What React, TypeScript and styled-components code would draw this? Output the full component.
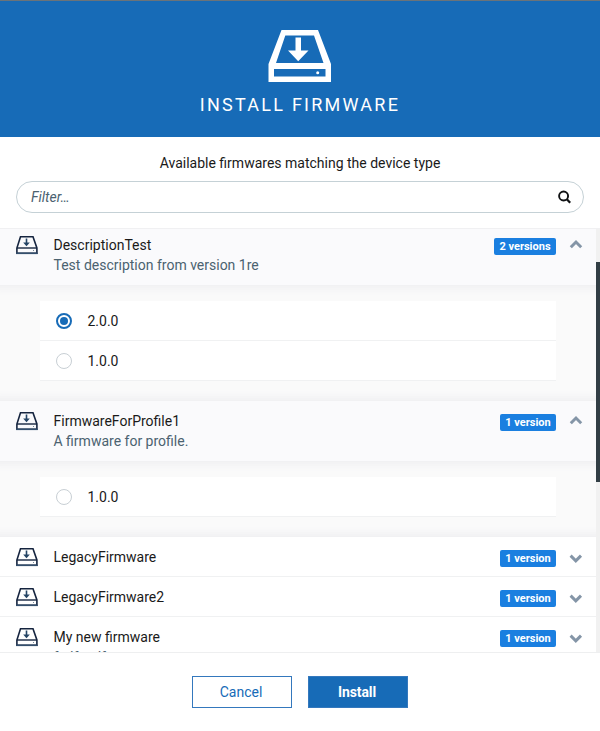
import React from "react";
import styled, { createGlobalStyle } from "styled-components";

const Global = createGlobalStyle`
  * { box-sizing: border-box; }
  body { margin: 0; background: #fff; font-family: Roboto, "Liberation Sans", sans-serif; font-size: 14px; line-height: 20px; color: #1a1a1a; }
`;
const Dialog = styled.main`
  width: 600px; height: 731px; overflow: hidden; display: flex; flex-direction: column; background: #fff;
`;
const Header = styled.header`
  height: 137px; flex: none; background: #176bb7; border-top: 1px solid #6b7379; color: #fff;
  display: flex; flex-direction: column; align-items: center; padding-top: 28px;
`;
const Title = styled.h1`
  margin: 10px 0 0; font-size: 18px; line-height: 24px; font-weight: 400; letter-spacing: 2.25px; text-transform: uppercase;
`;
const Intro = styled.p`
  flex: none; margin: 16px 0 8px; text-align: center;
`;
const SearchBox = styled.label`
  flex: none; height: 32px; margin: 0 16px 15px; padding: 0 12px 0 14px; border: 1px solid #c5d1d6; border-radius: 16px;
  display: flex; align-items: center; justify-content: space-between;
`;
const SearchInput = styled.input`
  flex: 1; border: 0; outline: 0; padding: 0; background: transparent; font: italic 14px/20px Roboto, sans-serif;
  &::placeholder { color: #4b6270; opacity: 1; }
`;
const Scroller = styled.div`
  height: 425px; flex: none; display: flex; overflow: hidden; border-top: 1px solid #f0f0f2; border-bottom: 1px solid #eeeff0;
`;
const List = styled.div`
  width: 596px; height: 100%; overflow: hidden;
  & > :first-child { margin-top: -4px; }
`;
const Track = styled.div`
  width: 4px; background: #f1f1f1; padding-top: 33px;
`;
const Thumb = styled.div`
  height: 220px; background: #323e45;
`;
const ItemHead = styled.div<{ $open?: boolean; $height: number }>`
  height: ${p => p.$height}px; padding: 10px 13px 0 16px; display: flex; align-items: flex-start;
  background: ${p => (p.$open ? "#fafafc" : "#fff")};
  border-bottom: ${p => (p.$open ? "0" : "1px solid #f0f1f2")};
`;
const ItemIcon = styled.span`
  width: 37.5px; height: 20px; display: flex;
`;
const ItemText = styled.div`
  flex: 1;
`;
const Description = styled.div`
  color: #4b6270;
`;
const Badge = styled.span<{ $wide?: boolean }>`
  width: ${p => (p.$wide ? 62 : 56)}px; height: 17px; margin: 3px 13px 0 0; border-radius: 2px; background: #1a7fe0; color: #fff;
  font-size: 11px; line-height: 17px; font-weight: 700; text-align: center; white-space: nowrap;
`;
const Chevron = styled.svg`
  width: 14px; height: 20px;
`;
const Panel = styled.div`
  padding: 16px 40px 20px; background: #fafafa;
  box-shadow: inset 0 12px 10px -10px #ececef, inset 0 -12px 10px -10px #ececef;
`;
const Option = styled.label`
  height: 40px; display: flex; align-items: center; gap: 15.5px; padding-left: 16px; background: #fff; border-bottom: 1px solid #f0f1f2;
`;
const Radio = styled.span<{ $checked?: boolean }>`
  width: 16px; height: 16px; border-radius: 50%; display: grid; place-items: center; background: #fff;
  border: ${p => (p.$checked ? "2px solid #176bb7" : "1px solid #c8cfd4")};
  &::after { content: ""; width: 8px; height: 8px; border-radius: 50%; background: ${p => (p.$checked ? "#176bb7" : "transparent")}; }
`;
const Footer = styled.footer`
  flex: 1; padding-top: 23px; display: flex; justify-content: center; align-items: flex-start; gap: 16px;
`;
const Button = styled.button<{ $primary?: boolean }>`
  width: 100px; height: 32px; padding: 0 2px 0 0; border: 1px solid #3478bd; font: ${p => (p.$primary ? 700 : 400)} 14px/20px Roboto, sans-serif;
  letter-spacing: ${p => (p.$primary ? "-0.1px" : "0")};
  background: ${p => (p.$primary ? "#176bb7" : "#fff")}; color: ${p => (p.$primary ? "#fff" : "#176bb7")};
`;

function DriveLarge() {
  return (
    <svg width="64" height="54" viewBox="0 0 64 54" fill="none">
      <path fill="#fff" fillRule="evenodd" d="M13.5 1H50L63 35V53H.5V35ZM17.3 6.5 8 34H55.5L46 6.5ZM6 40V47.5H57.5V40Z" />
      <path fill="#fff" d="M27.5 8.5H33V21.5H40.5L30.2 32.2 20 21.5H27.5Z" />
      <circle cx="49.7" cy="43.7" r="1.5" fill="#fff" />
    </svg>
  );
}
function DriveSmall() {
  return (
    <svg width="22" height="20" viewBox="0 0 22 20" fill="none">
      <path d="M4.5 1.7H17L20.9 13V18.2H.9V13Z" stroke="#15243f" strokeWidth="1.6" />
      <path d="M1 13H21" stroke="#15243f" strokeWidth="1.4" />
      <path d="M.1 18.3H21.7" stroke="#344f6d" strokeWidth="1.6" />
      <path d="M10.5 3.5V8" stroke="#244465" strokeWidth="1.6" />
      <path d="M7.2 7.5H13.8L10.5 11.2Z" fill="#244465" />
      <path d="M17 15.5H18" stroke="#7a8999" />
    </svg>
  );
}

type Firmware = { name: string; description?: string; height: number; versions?: string[]; selected?: string };
const firmwares: Firmware[] = [
  { name: "DescriptionTest", description: "Test description from version 1re", height: 60, versions: ["2.0.0", "1.0.0"], selected: "2.0.0" },
  { name: "FirmwareForProfile1", description: "A firmware for profile.", height: 60, versions: ["1.0.0"] },
  { name: "LegacyFirmware", height: 40 },
  { name: "LegacyFirmware2", height: 40 },
  { name: "My new firmware", description: "fsdfasdf", height: 60 },
];

function FirmwareItem({ item }: { item: Firmware }) {
  const several = (item.versions?.length ?? 1) > 1;
  return (
    <section>
      <ItemHead $open={!!item.versions} $height={item.height}>
        <ItemIcon><DriveSmall /></ItemIcon>
        <ItemText>{item.name}{item.description && <Description>{item.description}</Description>}</ItemText>
        <Badge $wide={several}>{several ? "2 versions" : "1 version"}</Badge>
        <Chevron viewBox="0 0 14 20" fill="none">
          <path d={item.versions ? "M1.8 12.2 7 7 12.2 12.2" : "M1.6 8.6 6.8 13.8 12 8.6"} stroke="#8495a7" strokeWidth="3" />
        </Chevron>
      </ItemHead>
      {item.versions && (
        <Panel>
          {item.versions.map(v => <Option key={v}><Radio $checked={v === item.selected} />{v}</Option>)}
        </Panel>
      )}
    </section>
  );
}

export default function App() {
  return (
    <Dialog>
      <Global />
      <Header><DriveLarge /><Title>Install firmware</Title></Header>
      <Intro>Available firmwares matching the device type</Intro>
      <SearchBox>
        <SearchInput placeholder="Filter…" />
        <svg width="13" height="14" viewBox="0 0 13 14" fill="none" stroke="#101214" strokeWidth="1.9">
          <circle cx="5.6" cy="6" r="4.5" /><path d="M8.8 9.3 12.2 12.8" strokeWidth="2.3" />
        </svg>
      </SearchBox>
      <Scroller>
        <List>{firmwares.map(f => <FirmwareItem key={f.name} item={f} />)}</List>
        <Track><Thumb /></Track>
      </Scroller>
      <Footer><Button>Cancel</Button><Button $primary>Install</Button></Footer>
    </Dialog>
  );
}
